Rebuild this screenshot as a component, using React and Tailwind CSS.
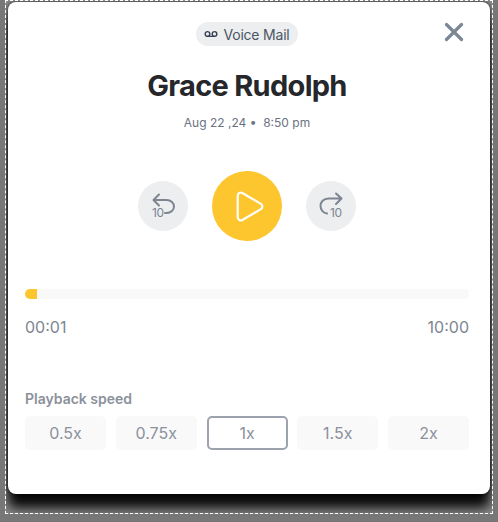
import React from "react";
import { Voicemail, X, Play } from "lucide-react";

const speeds = ["0.5x", "0.75x", "1x", "1.5x", "2x"];

const SkipButton = ({ forward }) => (
  <button className="relative w-[50px] h-[50px] rounded-full bg-[#eceef0] shrink-0">
    <svg
      width="50"
      height="50"
      viewBox="0 0 50 50"
      fill="none"
      stroke="#7d8590"
      strokeWidth="2"
      strokeLinecap="round"
      strokeLinejoin="round"
    >
      {forward ? (
        <path d="M30 12.5L35.5 17.5L30 23M35.5 17.5H22.5C17.5 17.5 14.5 21 14.5 25C14.5 29 17.5 32 21 32.5" />
      ) : (
        <path d="M21 13.5L15.5 19L21 24.5M15.5 19H28.5C33 19 36 22 36 25.5C36 29 33 32 28.5 32H27" />
      )}
    </svg>
    <span
      className={`absolute top-[25px] text-[12px] leading-[14px] tracking-[-0.4px] text-[#7d8590] ${
        forward ? "left-[24px]" : "left-[14px]"
      }`}
    >
      10
    </span>
  </button>
);

export default function App() {
  return (
    <div className="w-[498px] h-[522px] overflow-hidden bg-[#777777] pl-[5px] font-['Inter',sans-serif]">
      {/* dashed edge + dark shadow around the card */}
      <div className="w-[488px] h-[514px] overflow-hidden border border-dashed border-white bg-[#8a8a8a] pl-[2px] pt-[1px]">
        <div className="w-[482px] h-[492px] bg-white rounded-lg shadow-[0_14px_12px_rgba(0,0,0,0.95),0_0_4px_rgba(0,0,0,0.8)] pl-[17px] pr-[21px] relative">
          <button className="absolute top-[15px] right-[21px] text-[#7b8794]">
            <X size={30} strokeWidth={2.6} />
          </button>

          <div className="flex flex-col items-center pt-[20px]">
            <div className="h-[24px] w-[102px] rounded-full bg-[#eceef0] flex items-center justify-center gap-[5px] text-[14px] tracking-[-0.2px] text-[#4b5563]">
              <Voicemail size={14} strokeWidth={2.4} className="text-[#374151]" />
              <span>Voice Mail</span>
            </div>
            <h1 className="mt-[21px] text-[29px] leading-[38px] font-bold tracking-[-0.7px] text-[#25272b]">
              Grace Rudolph
            </h1>
            <p className="mt-[9px] text-[12px] leading-[18px] text-[#6b7280] whitespace-pre">
              Aug 22 ,24 •  8:50 pm
            </p>
          </div>

          <div className="flex items-center justify-center gap-[24px] mt-[39px]">
            <SkipButton />
            <button className="w-[70px] h-[70px] rounded-full bg-[#fdc62e] flex items-center justify-center shrink-0">
              <Play size={37} strokeWidth={1.4} className="text-white ml-[2px]" />
            </button>
            <SkipButton forward />
          </div>

          <div className="mt-[48px] h-[10px] rounded-sm bg-[#f9f9fa] overflow-hidden">
            <div className="w-[12px] h-full rounded-l-full bg-[#fdc62e]" />
          </div>
          <div className="flex justify-between mt-[18px] text-[16px] leading-[20px] text-[#7d8590]">
            <span>00:01</span>
            <span>10:00</span>
          </div>

          <p className="mt-[52px] text-[14px] leading-[20px] font-semibold text-[#8b919b]">
            Playback speed
          </p>
          <div className="grid grid-cols-5 gap-[9.75px] mt-[7px]">
            {speeds.map((s) => (
              <button
                key={s}
                className={`h-[34px] rounded-[5px] text-[16px] text-[#8b919b] ${
                  s === "1x"
                    ? "bg-white border-2 border-[#9ca3af]"
                    : "bg-[#f9f9fa]"
                }`}
              >
                {s}
              </button>
            ))}
          </div>
        </div>
      </div>
    </div>
  );
}
